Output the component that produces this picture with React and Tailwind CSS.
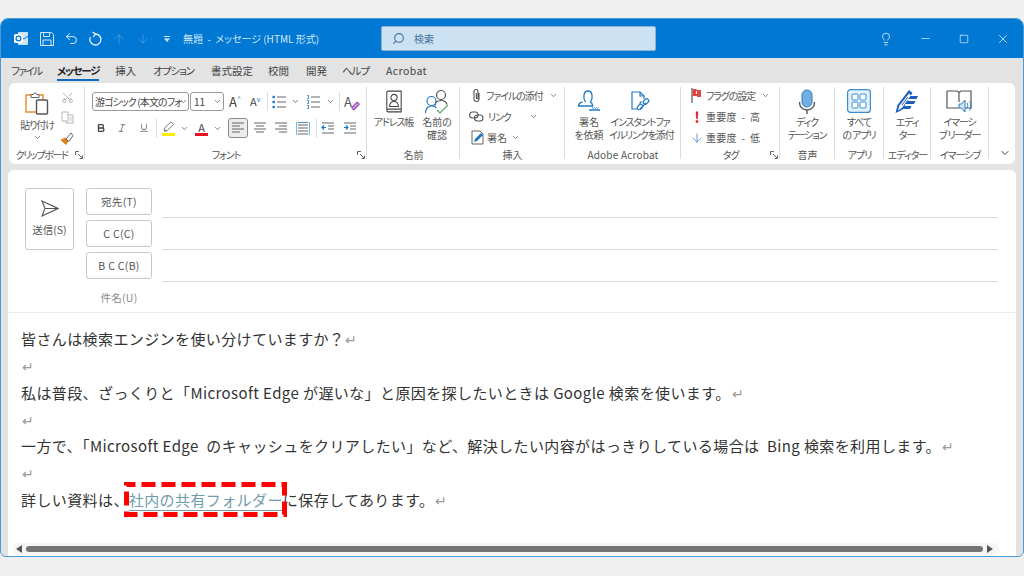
import { Undo2, ArrowUp, ArrowDown, Search, Lightbulb, Minus, Square, X, Scissors, ChevronDown, Bold, Italic, Underline } from 'lucide-react';

const FONT = { fontFamily: '"Noto Sans CJK JP", "Noto Sans", sans-serif' };

const tabs = [
  { label: 'ファイル', cls: 'tracking-[-1.4px]' },
  { label: 'メッセージ', cls: 'tracking-[-1.2px]' },
  { label: '挿入', cls: 'ml-[1px]' },
  { label: 'オプション', cls: 'ml-[2px] tracking-[-1.1px]' },
  { label: '書式設定', cls: 'ml-[2px]' },
  { label: '校閲', cls: '' },
  { label: '開発', cls: 'ml-[2px]' },
  { label: 'ヘルプ', cls: 'tracking-[-1px]' },
  { label: 'Acrobat', cls: 'ml-[2px] tracking-[0.4px]' },
];

function Launcher() {
  return (
    <svg width="8" height="8" viewBox="0 0 8 8" className="text-[#666]" fill="none" stroke="currentColor">
      <path d="M.5 4V.5H4M3 3l4 4M7.500 4.500V7.500H4.500" />
    </svg>
  );
}

function Group({ label, width, launcher, labelClass = 'tracking-[-1px]', children }) {
  return (
    <div className="relative flex flex-col h-full shrink-0" style={{ width }}>
      <div className="flex-1 min-h-0">{children}</div>
      <div className={`h-[14px] text-center text-[10px] leading-[14px] text-[#555] whitespace-nowrap ${labelClass}`}>{label}</div>
      <span className="absolute right-0 top-0 bottom-[3px] w-px bg-[#dcdcdc]" />
      {launcher && (
        <div className="absolute right-[2px] bottom-[3px]">
          <Launcher />
        </div>
      )}
    </div>
  );
}

function BigButton({ icon, width, children }) {
  return (
    <div className="shrink-0" style={{ width }}>
      <div className="h-[28px] flex items-center justify-center">{icon}</div>
      <div className="text-center text-[10px] leading-[13px] tracking-[-1.1px] text-[#555] whitespace-nowrap">{children}</div>
    </div>
  );
}

function Caret({ className = '' }) {
  return <ChevronDown size={9} strokeWidth={1.8} className={`text-[#444] shrink-0 ${className}`} />;
}

function SmallRow({ icon, children }) {
  return (
    <div className="flex items-center h-[21px] gap-[4px] text-[10px] tracking-[-1.1px] text-[#555] whitespace-nowrap">
      {icon}
      {children}
    </div>
  );
}

function Sep({ className = '' }) {
  return <div className={`w-px h-[19px] bg-[#ddd] shrink-0 ${className}`} />;
}

// 行アイコン (揃え・インデント)
function Lines({ rows, className = '', stroke = '#666', children }) {
  return (
    <svg width="14" height="14" viewBox="0 0 14 14" fill="none" stroke={stroke} strokeWidth="1.200" className={`shrink-0 ${className}`}>
      {rows.map(([a, b, y]) => (
        <path key={y} d={`M${a} ${y}H${b}`} />
      ))}
      {children}
    </svg>
  );
}

function BulletIcon({ numbered, className = '' }) {
  return (
    <svg width="14" height="14" viewBox="0 0 14 14" fill="none" className={`shrink-0 ${className}`}>
      {[2, 7, 12].map((y) => (
        <g key={y}>
          {numbered ? (
            <path d={`M1 ${y - 1.500}h1.500v3H1`} stroke="#1e78c8" strokeWidth=".8" />
          ) : (
            <rect x="0.500" y={y - 1.200} width="2.400" height="2.400" fill="#1e78c8" />
          )}
          <path d={`M5 ${y}h9`} stroke="#666" strokeWidth="1.200" />
        </g>
      ))}
    </svg>
  );
}

function Ribbon() {
  return (
    <div className="mx-2 h-[81px] shrink-0 bg-white rounded-md flex items-stretch pt-1 pb-[2px] relative [font-feature-settings:'palt']">
      <Group label="クリップボード" width={76} labelClass="tracking-[-1.4px] pr-[11px]" launcher>
        <div className="flex pl-[10px] pt-[4px]">
          <div className="w-[36px] flex flex-col items-center">
            <svg width="24" height="24" viewBox="0 0 24 24" fill="none">
              <path d="M1 4h17v17H1z" stroke="#e8902e" strokeWidth="1.500" />
              <path d="M6 3.500h2.500a1.500 1.500 0 0 1 3 0H14v3H6z" fill="#fff" stroke="#666" />
              <rect x="11.500" y="9" width="11" height="14" rx="1" fill="#fff" stroke="#555" strokeWidth="1.400" />
            </svg>
            <div className="text-[10px] leading-[13px] tracking-[-1.1px] text-[#555] mt-[3px] whitespace-nowrap">貼り付け</div>
            <Caret className="mt-[2px]" />
          </div>
          <div className="flex flex-col items-center gap-[7px] ml-[3px] w-[18px]">
            <Scissors size={13} strokeWidth={1.300} className="text-[#999] -rotate-90" />
            <svg width="13" height="13" viewBox="0 0 13 13" fill="none" stroke="#b5b5b5">
              <path d="M1 1h6v9H1zM7 4h5v8H5v-2M8.500 7h2M8.500 9h2" />
            </svg>
            <svg width="14" height="14" viewBox="0 0 14 14" fill="none">
              <path d="M1 9l4-2 3 3-2 3.500z" fill="#e8801a" stroke="#e8801a" />
              <path d="M6 8l3 2.500 4-6-2-2.500z" fill="#fff" stroke="#666" />
            </svg>
          </div>
        </div>
      </Group>

      <Group label="フォント" width={282} launcher>
        <div className="pl-[7px] pt-[5px]">
          <div className="flex items-center h-[19px]">
            <div className="w-[97px] h-[19px] border border-[#999] rounded-[3px] flex items-center pl-[2px] text-[10px] tracking-[-0.9px] text-[#444] whitespace-nowrap">
              <span className="flex-1 min-w-0">游ゴシック (本文のフォ</span>
              <Caret />
            </div>
            <div className="ml-[1px] w-[34px] h-[19px] border border-[#999] rounded-[3px] flex items-center justify-between pl-[3px] pr-[1px] text-[10px] text-[#444]">
              11
              <Caret />
            </div>
            <span className="ml-[5px] w-[13px] text-[13px] leading-none text-[#444] flex items-start">
              A<span className="text-[7px] leading-[7px] text-[#5a9ad0]">^</span>
            </span>
            <span className="ml-[8px] w-[13px] text-[11px] leading-none text-[#444] flex items-start">
              A<span className="text-[7px] leading-[7px] text-[#1e78c8]">v</span>
            </span>
            <Sep className="ml-[4px]" />
            <BulletIcon className="ml-[4px]" />
            <Caret className="ml-[5px]" />
            <BulletIcon numbered className="ml-[6px]" />
            <Caret className="ml-[6px]" />
            <Sep className="ml-[4px]" />
            <span className="ml-[4px] text-[13px] leading-none text-[#555] relative">
              A
              <span className="absolute left-[7px] bottom-0 w-[9px] h-[4px] bg-[#c89be0] border border-[#9440b8] -rotate-45 rounded-[1px]" />
            </span>
          </div>
          <div className="flex items-center h-[20px] mt-[7px]">
            <Bold size={10} strokeWidth={3.200} className="ml-[4px] text-[#444]" />
            <Italic size={10} className="ml-[11px] text-[#666]" />
            <Underline size={10} className="ml-[12px] text-[#666]" />
            <Sep className="ml-[7px]" />
            <div className="ml-[5px] flex flex-col items-center">
              <svg width="13" height="11" viewBox="0 0 13 11" fill="none" stroke="#777">
                <path d="M2 9.500l1-3L9 .800l2.500 2.500-6 6zM2 10h3" />
              </svg>
              <div className="mt-[1px] w-[13px] h-[3px] bg-[#ffee00]" />
            </div>
            <Caret className="ml-[5px]" />
            <div className="ml-[6px] flex flex-col items-center">
              <span className="text-[11px] leading-[12px] text-[#444]">A</span>
              <div className="w-[13px] h-[3px] bg-[#e81123]" />
            </div>
            <Caret className="ml-[5px]" />
            <div className="ml-[6px] w-[20px] h-[20px] bg-[#ececec] border border-[#8a8a8a] rounded-[3px] flex items-center justify-center shrink-0">
              <Lines rows={[[1, 13, 2], [1, 9, 5], [1, 13, 8], [1, 9, 11]]} />
            </div>
            <Lines rows={[[1, 13, 2], [3, 11, 5], [1, 13, 8], [3, 11, 11]]} className="ml-[5px]" />
            <Lines rows={[[1, 13, 2], [5, 13, 5], [1, 13, 8], [5, 13, 11]]} className="ml-[7px]" />
            <Lines rows={[[2, 12, 4], [2, 12, 7], [2, 12, 10], [2, 12, 13]]} className="ml-[8px]">
              <path d="M.500 1v13M13.500 1v13" stroke="#7cb4e2" />
              <path d="M2 1.500h10" stroke="#4a8ecb" />
            </Lines>
            <Sep className="ml-[6px]" />
            <Lines rows={[[1, 13, 2], [7, 13, 5], [7, 13, 8], [1, 13, 12]]} className="ml-[4px]">
              <path d="M5 6.500H1M3 4.500l-2 2 2 2" stroke="#1e78c8" />
            </Lines>
            <Lines rows={[[1, 13, 2], [7, 13, 5], [7, 13, 8], [1, 13, 12]]} className="ml-[8px]">
              <path d="M1 6.500h4M3 4.500l2 2-2 2" stroke="#1e78c8" />
            </Lines>
          </div>
        </div>
      </Group>

      <Group label="名前" width={93} labelClass="">
        <div className="flex pl-[6px]">
          <BigButton
            width={41}
            icon={
              <svg width="18" height="23" viewBox="0 0 20 25" fill="none" stroke="#444" strokeWidth="1.200">
                <path d="M2 21V2.500A1.500 1.500 0 0 1 3.500 1H18v23H3.500A1.500 1.500 0 0 1 2 22.500 1.500 1.500 0 0 1 3.500 21H18" />
                <circle cx="10" cy="8" r="3.400" />
                <path d="M5 18c.5-4 2.500-5.500 5-5.500s4.500 1.500 5 5.500z" />
              </svg>
            }
          >
            アドレス帳
          </BigButton>
          <div className="ml-[3px]">
            <BigButton
              width={40}
              icon={
                <svg width="26" height="25" viewBox="0 0 26 25" fill="none" strokeWidth="1.200">
                  <circle cx="17" cy="6" r="4.500" stroke="#555" />
                  <path d="M11 17c0-3 2-5.500 6-5.500s5.500 2 6 4" stroke="#555" />
                  <circle cx="7.500" cy="12" r="4.500" fill="#fff" stroke="#1e78c8" />
                  <path d="M1.500 24c0-4 2.500-7 6-7s4 .8 5 2" stroke="#1e78c8" />
                  <path d="M13 21l3 3 8-8" stroke="#59a96f" />
                </svg>
              }
            >
              <span className="tracking-normal">名前の<br />確認</span>
            </BigButton>
          </div>
        </div>
      </Group>

      <Group label="挿入" width={105} labelClass="">
        <div className="pl-[11px] -mt-[2px]">
          <SmallRow
            icon={
              <svg width="11" height="15" viewBox="0 0 11 15" fill="none" stroke="#555" strokeWidth="1.100">
                <path d="M8 5v6a2.500 2.500 0 0 1-5 0V3.500a1.800 1.800 0 0 1 4 0V10a.8.8 0 0 1-1.600 0V5" />
              </svg>
            }
          >
            <span>ファイルの添付</span><Caret className="ml-[2px]" />
          </SmallRow>
          <SmallRow
            icon={
              <svg width="15" height="11" viewBox="0 0 15 11" fill="none" stroke="#555" strokeWidth="1.100" className="-ml-[2px]">
                <rect x="0.600" y="1" width="8.500" height="6" rx="3" />
                <rect x="5.500" y="4" width="8.500" height="6" rx="3" />
              </svg>
            }
          >
            <span>リンク</span><Caret className="ml-[14px]" />
          </SmallRow>
          <SmallRow
            icon={
              <svg width="14" height="15" viewBox="0 0 14 15" fill="none">
                <path d="M1 14V1h8l3 3v10z" stroke="#666" />
                <path d="M3 12l1-3 6-6 2 2-6 6z" fill="#1e78c8" />
              </svg>
            }
          >
            <span className="-ml-[2px] tracking-normal">署名</span><Caret />
          </SmallRow>
        </div>
      </Group>

      <Group label="Adobe Acrobat" width={116} labelClass="tracking-[0.2px]">
        <div className="flex pl-[4px]">
          <BigButton
            width={40}
            icon={
              <svg width="24" height="22" viewBox="0 0 24 22" fill="none" stroke="#1e78c8" strokeWidth="1.300">
                <path d="M8.500 12C6 9 6 1 11 1s5 8 2.500 11c1.500 1 2 2 2.300 4H1.500c0-2 2-3.500 4-4" />
                <path d="M12 20h11" />
                <path d="M15 17.500l1.500 1 1-1 1 1 1-1 1 1 1-1" strokeWidth=".8" />
              </svg>
            }
          >
            <span className="tracking-normal">署名<br />を依頼</span>
          </BigButton>
          <BigButton
            width={62}
            icon={
              <svg width="20" height="22" viewBox="0 0 20 22" fill="none" stroke="#1e78c8" strokeWidth="1.200">
                <path d="M8 19H2V2h8l4 4v3M10 2v4h4" />
                <path d="M9.500 13.500l2-2M10 19l6-6" />
                <rect x="7" y="15" width="6" height="4" rx="2" transform="rotate(-45 10 17)" />
                <rect x="13" y="9.500" width="6" height="4" rx="2" transform="rotate(-45 16 11.500)" />
              </svg>
            }
          >
            インスタントファ<br />イルリンクを添付
          </BigButton>
        </div>
      </Group>

      <Group label="タグ" width={99} launcher>
        <div className="pl-[10px] -mt-[2px]">
          <SmallRow
            icon={
              <svg width="11" height="15" viewBox="0 0 11 15" fill="none" className="shrink-0">
                <path d="M1 0v15" stroke="#555" strokeWidth="1.200" />
                <path d="M1.500 1h4v1h4.500v7H6V8H1.500z" fill="#e04848" />
                <path d="M5 3h1v3H5z" fill="#fff" />
              </svg>
            }
          >
            <span>フラグの設定</span><Caret className="ml-[2px]" />
          </SmallRow>
          <SmallRow icon={<span className="w-[11px] text-center text-[15px] leading-none font-bold text-[#e81123]">!</span>}>
            <span className="whitespace-pre tracking-[0.2px]">重要度  -  高</span>
          </SmallRow>
          <SmallRow icon={<ArrowDown size={14} strokeWidth={1.400} className="-ml-[1px] -mr-[2px] text-[#3c90d8]" />}>
            <span className="ml-[0px] whitespace-pre tracking-[0.2px]">重要度  -  低</span>
          </SmallRow>
        </div>
      </Group>

      <Group label="音声" width={55} labelClass="">
        <BigButton
          width={54}
          icon={
            <svg width="20" height="25" viewBox="0 0 20 25" fill="none">
              <rect x="5" y="1" width="10" height="17" rx="5" fill="#72aee0" stroke="#2f7fc4" />
              <path d="M2.500 13c0 5 3 8 7.500 8s7.500-3 7.500-8M10 21v4" stroke="#555" strokeWidth="1.400" />
            </svg>
          }
        >
          ディク<br />テーション
        </BigButton>
      </Group>

      <Group label="アプリ" width={49}>
        <BigButton
          width={48}
          icon={
            <svg width="24" height="24" viewBox="0 0 24 24" fill="none" stroke="#3a8fd2">
              <rect x="0.600" y="0.600" width="22.800" height="22.800" rx="3" fill="#e4f1fb" strokeWidth="1.200" />
              <rect x="5" y="5" width="6" height="6" rx="1" fill="#fff" />
              <rect x="13" y="5" width="6" height="6" rx="1" fill="#fff" />
              <rect x="5" y="13" width="6" height="6" rx="1" fill="#fff" />
              <rect x="13" y="13" width="6" height="6" rx="1" fill="#fff" />
            </svg>
          }
        >
          すべて<br />の アプリ
        </BigButton>
      </Group>

      <Group label="エディター" width={47}>
        <BigButton
          width={46}
          icon={
            <svg width="26" height="25" viewBox="0 0 26 25" fill="none">
              <path d="M1.500 24l2-8L15 1l3.500 3-2 3H24l-1.500 3H14.500l-1 2h8l-1.500 3H11.500l-1 2h7l-1.500 3H9l-3 2z" fill="#1e5fbe" />
              <path d="M4 21.500l1.500-5L15 4.500l2 1.800-9 12.500z" fill="#fff" />
              <path d="M8 16l6-8" stroke="#1e5fbe" />
            </svg>
          }
        >
          エディ<br />ター
        </BigButton>
      </Group>

      <Group label="イマーシブ" width={58}>
        <BigButton
          width={57}
          icon={
            <svg width="27" height="23" viewBox="0 0 27 23" fill="none">
              <path d="M1 1h10l2 1.500L15 1h10v17h-9M13 18H1V1M13 2.500V12" stroke="#555" strokeWidth="1.200" />
              <path d="M13 14h2.500l3.500-4v12l-3.500-4H13z" fill="#cfe6f8" stroke="#2f7fc4" />
              <path d="M21 13c1 1 1 4 0 5M23.500 11.500c2 2 2 7 0 9" stroke="#2f7fc4" />
            </svg>
          }
        >
          イマーシ<br />ブ リーダー
        </BigButton>
      </Group>

      <div className="flex-1 flex items-end justify-center pb-[3px] pl-[6px]">
        <ChevronDown size={12} className="text-[#444]" />
      </div>
    </div>
  );
}

function AddressButton({ children, muted }) {
  return (
    <div
      className={`w-[66px] h-[27px] rounded-[3px] flex items-center justify-center text-[10.5px] tracking-[0.3px] ${
        muted ? 'text-[#888]' : 'border border-[#c8c8c8] text-[#555]'
      }`}
    >
      {children}
    </div>
  );
}

function Para({ children }) {
  return <p className="h-[26.85px] leading-[26.85px] text-[15px] tracking-[0.4px] text-[#333] whitespace-pre">{children}</p>;
}

function Ret() {
  return <span className="text-[#999] text-[14px] tracking-normal ml-[1px]">↵</span>;
}

export default function App() {
  return (
    <div className="w-[1024px] h-[576px] bg-[#f0f0f0] overflow-hidden pt-[18px]" style={FONT}>
      <div className="h-[539px] bg-[#e3e3e3] rounded-t-lg rounded-b-md border border-[#4a9ad8] overflow-hidden flex flex-col">
        {/* タイトルバー */}
        <div className="h-[39px] shrink-0 bg-[#0078d4] flex items-center text-white [font-feature-settings:'palt']">
          <svg width="14" height="15" viewBox="0 0 14 15" className="ml-[13px] shrink-0">
            <rect x="4" y="1" width="10" height="13" rx="1" fill="#cfe4f7" />
            <path d="M6 5l4 3 4-3" stroke="#0078d4" fill="none" />
            <rect x="0" y="3" width="9" height="9" rx="1.500" fill="#fff" />
            <circle cx="4.500" cy="7.500" r="2.400" fill="none" stroke="#0078d4" strokeWidth="1.300" />
          </svg>
          <svg width="14" height="14" viewBox="0 0 14 14" fill="none" stroke="#d5e8f8" className="ml-[12px] shrink-0">
            <path d="M.5.500h11l2 2v11H.5zM3.500.5v4h6v-4M3 13.500V8h8v5.500" />
          </svg>
          <Undo2 size={15} strokeWidth={1.500} className="ml-[10px] text-[#e8f2fb] shrink-0" />
          <svg width="15" height="15" viewBox="0 0 15 15" fill="none" stroke="#e8f2fb" strokeWidth="1.300" className="ml-[9px] shrink-0">
            <path d="M4.500 1l3 2-2.200 2.800M7.500 3a5.500 5.500 0 1 1-5 3" />
          </svg>
          <ArrowUp size={14} strokeWidth={1.200} className="ml-[9px] text-[#5aa6e4] shrink-0" />
          <ArrowDown size={14} strokeWidth={1.200} className="ml-[10px] text-[#5aa6e4] shrink-0" />
          <svg width="8" height="8" viewBox="0 0 8 8" className="ml-[13px] shrink-0" fill="#d5e8f8">
            <path d="M1 1h6v1H1zM1 3.500h6L4 7z" />
          </svg>
          <span className="ml-[12px] text-[10px] text-[#d5e8f8] whitespace-pre w-[198px] shrink-0">無題  -  メッセージ (HTML 形式)</span>
          <div className="w-[275px] h-[25px] shrink-0 bg-[#cce1f2] border border-[#8fb2cf] rounded-[2px] flex items-center pl-[10px] text-[10px] text-[#44709a]">
            <Search size={13} className="-scale-x-100" />
            <span className="ml-[9px]">検索</span>
          </div>
          <Lightbulb size={14} strokeWidth={1.300} className="ml-[223px] text-white shrink-0" />
          <Minus size={13} strokeWidth={1.200} className="ml-[26px] shrink-0" />
          <Square size={10} strokeWidth={1.500} className="ml-[27px] shrink-0" />
          <X size={14} strokeWidth={1.200} className="ml-[27px] shrink-0" />
        </div>
        {/* タブ */}
        <div className="h-[25px] shrink-0 flex items-center pl-[10px] gap-[15px] text-[10.5px] text-[#444] whitespace-nowrap [font-feature-settings:'palt']">
          {tabs.map((tab) => (
            <span
              key={tab.label}
              className={`${tab.cls} ${
                tab.label === 'メッセージ'
                  ? 'relative font-semibold text-[#222] after:absolute after:left-0 after:right-0 after:-bottom-[3px] after:h-[2px] after:bg-[#0f6cbd]'
                  : ''
              }`}
            >
              {tab.label}
            </span>
          ))}
        </div>
        <Ribbon />
        {/* 本文 */}
        <div className="mt-[6px] ml-[7px] mr-[7px] flex-1 min-h-0 bg-white rounded-t-md flex flex-col">
          <div className="h-[143px] shrink-0 border-b border-[#eee] flex pt-[18px] pl-[17px] pr-[18px]">
            <div className="w-[49px] h-[62px] border border-[#c8c8c8] rounded-[3px] flex flex-col items-center pt-[11px] text-[10.5px] text-[#555]">
              <svg width="18" height="17" viewBox="0 0 18 17" fill="none" stroke="#555" strokeWidth="1.100">
                <path d="M1 1l16 7.500L1 16l3-7.500zM4 8.500h13" />
              </svg>
              <span className="mt-[5px]">送信(S)</span>
            </div>
            <div className="ml-[12px] flex flex-col gap-[5px]">
              <AddressButton>宛先(T)</AddressButton>
              <AddressButton>C C(C)</AddressButton>
              <AddressButton>B C C(B)</AddressButton>
              <AddressButton muted>件名(U)</AddressButton>
            </div>
            <div className="ml-[10px] flex-1 flex flex-col">
              <div className="h-[30px] border-b border-[#d8d8d8]" />
              <div className="h-[32px] border-b border-[#d8d8d8]" />
              <div className="h-[32px] border-b border-[#d8d8d8]" />
            </div>
          </div>
          <div className="flex-1 min-h-0 pl-[13px] pt-[13px]">
            <Para>皆さんは検索エンジンを使い分けていますか？<Ret /></Para>
            <Para><Ret /></Para>
            <Para>私は普段、ざっくりと「Microsoft Edge が遅いな」と原因を探したいときは Google 検索を使います。<Ret /></Para>
            <Para><Ret /></Para>
            <Para>一方で、「Microsoft Edge  のキャッシュをクリアしたい」など、解決したい内容がはっきりしている場合は  Bing 検索を利用します。<Ret /></Para>
            <Para><Ret /></Para>
            <Para>
              詳しい資料は、
              <span className="relative text-[#6f9cab] underline underline-offset-4">
                社内の共有フォルダー
                <svg width="163" height="35" viewBox="0 0 163 35" fill="none" className="absolute -left-[5px] -top-[7px]">
                  <rect x="2.500" y="2.500" width="158" height="30" stroke="#ff0000" strokeWidth="5" strokeDasharray="14 6" strokeDashoffset="5" />
                </svg>
              </span>
              に保存してあります。<Ret />
            </Para>
          </div>
          <div className="h-[12px] shrink-0 mb-[1px] ml-[4px] mr-[16px] flex items-center bg-[#f6f6f6] rounded-full pl-[4px] pr-[7px]">
            <svg width="6" height="8" viewBox="0 0 6 8" fill="#555"><path d="M6 0v8L0 4z" /></svg>
            <div className="ml-[4px] flex-1 h-[6px] rounded-full bg-[#757575]" />
            <svg width="6" height="8" viewBox="0 0 6 8" fill="#555" className="ml-[4px]"><path d="M0 0v8l6-4z" /></svg>
          </div>
        </div>
      </div>
    </div>
  );
}
